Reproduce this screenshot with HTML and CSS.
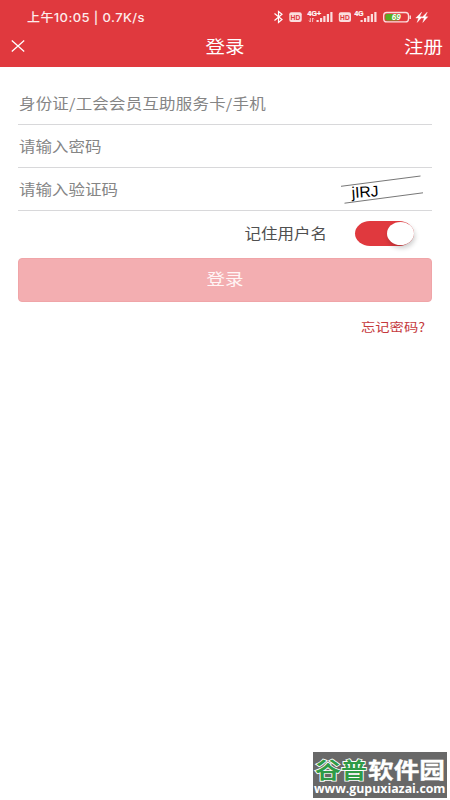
FILE: index.html
```html
<!DOCTYPE html>
<html lang="zh-CN">
<head>
<meta charset="utf-8">
<title>登录</title>
<link rel="stylesheet" href="styles.css">
</head>
<body>
<header class="top">
  <div class="status">
    <span class="time">上午10:05 | 0.7K/s</span>
    <svg class="indicators" width="160" height="24" viewBox="270 5 160 24">
      <path d="M274.5 13.5 282 19.5 278.5 22.5V11.5L282 14.2 274.5 20.5" fill="none" stroke="#fff" stroke-width="1.2"/>
      <rect x="289.3" y="12.3" width="12.4" height="9.6" rx="2" fill="#fbdede"/>
      <text class="hd" x="290.6" y="19.7" textLength="9.8" lengthAdjust="spacingAndGlyphs">HD</text>
      <text class="net" x="307.6" y="16" textLength="13.5" lengthAdjust="spacingAndGlyphs">4G+</text>
      <path d="M310.3 18v4M312.6 18v4M309 20.5l1.3 1.5M312.6 18l1.3 1.3" stroke="#fbdede" stroke-width=".8" fill="none"/>
      <g fill="#fbdede">
        <path d="M316.5 20h2.2v2h-2.2zM320 18h2.2v4H320zM323.3 16h2.2v6h-2.2zM326.8 14h2.2v8h-2.2zM330.3 12h2.2v10h-2.2z"/>
        <path d="M360.5 20h2.2v2h-2.2zM364 18h2.2v4H364zM367.3 16h2.2v6h-2.2zM370.8 14h2.2v8h-2.2zM374.3 12h2.2v10h-2.2z"/>
      </g>
      <rect x="338.8" y="12.3" width="12.2" height="9.6" rx="2" fill="#fbdede"/>
      <text class="hd" x="340.1" y="19.7" textLength="9.6" lengthAdjust="spacingAndGlyphs">HD</text>
      <text class="net" x="354.6" y="16" textLength="9" lengthAdjust="spacingAndGlyphs">4G</text>
      <rect x="383.7" y="12.5" width="24.8" height="9.4" rx="3" fill="none" stroke="#fbdede" stroke-width="1.3"/>
      <path d="M387 14h8.5v6.4h-8.5q-1.6 0-1.6-1.6v-3.2q0-1.6 1.6-1.6z" fill="#58ad20"/>
      <path d="M395.5 14h5l-2 6.4h-3z" fill="#58ad20"/>
      <path d="M410.2 15.5v3.4" stroke="#fbdede" stroke-width="1.5"/>
      <text class="charge" x="391.8" y="20.3" textLength="9" lengthAdjust="spacingAndGlyphs">69</text>
      <path d="M421.6 12.2 415.8 18h2.8l-1.4 4.4 5-5.6h-2.7zM427.2 12.2 421.4 18h2.8l-1.4 4.4 5-5.6h-2.7z" fill="#fff" stroke="#fff" stroke-width=".4"/>
    </svg>
  </div>
  <nav class="nav">
    <svg class="close" width="14" height="12" viewBox="0 0 14 12"><path d="M.8.6 13.2 11.4M13.2.6.8 11.4" stroke="#fff" stroke-width="1.3"/></svg>
    <h1 class="title">登录</h1>
    <a class="register">注册</a>
  </nav>
</header>
<main class="form">
  <div class="field"><span class="hint account">身份证/工会会员互助服务卡/手机</span></div>
  <div class="field"><span class="hint">请输入密码</span></div>
  <div class="field">
    <span class="hint">请输入验证码</span>
    <svg class="captcha" width="84" height="30" viewBox="340 174 84 30">
      <path d="M341 186.3 420.5 176M344.5 203.2 423 192.8" stroke="#777" stroke-width="1"/>
      <text x="352" y="198" transform="rotate(-4 352 198)" textLength="27" lengthAdjust="spacingAndGlyphs">jIRJ</text>
    </svg>
  </div>
  <div class="remember">
    <span class="remember-text">记住用户名</span>
    <span class="switch"><span class="knob"></span></span>
  </div>
  <div class="submit"><span class="submit-text">登录</span></div>
  <div class="forgot"><span class="forgot-text">忘记密码?</span></div>
</main>
<svg class="watermark" width="134" height="46" viewBox="0 0 134 46">
  <rect width="134" height="46" fill="#686868"/>
  <text class="brand brand-green" x="2" y="25.5" textLength="52" lengthAdjust="spacingAndGlyphs">谷普</text>
  <text class="brand brand-white" x="55" y="25.5" textLength="77" lengthAdjust="spacingAndGlyphs">软件园</text>
  <text class="site" x="1" y="41" textLength="131.5" lengthAdjust="spacingAndGlyphs">www.gupuxiazai.com</text>
</svg>
</body>
</html>
```
FILE: styles.css
```css
* { box-sizing: border-box; }
body {
  margin: 0;
  height: 800px;
  overflow: hidden;
  background: #fff;
  font-family: "Noto Sans CJK SC", sans-serif;
}
.top {
  height: 67px;
  padding-top: 5px;
  background: #e0393e;
  color: #fff;
}
.status {
  display: flex;
  align-items: center;
  justify-content: space-between;
  height: 24px;
  padding: 0 20px 0 27px;
}
.time {
  font: 500 13px/24px Inter, "Noto Sans CJK SC", sans-serif;
  letter-spacing: .4px;
  white-space: pre;
  color: #fdecec;
  transform: scaleY(.92);
}
.indicators { display: block; }
.hd { font: 700 7.5px "Liberation Sans", sans-serif; fill: #e0393e; }
.net { font: 700 6.5px "Liberation Sans", sans-serif; fill: #fff; stroke: #fff; stroke-width: .2px; }
.charge { font: italic 700 8.5px "Liberation Sans", sans-serif; fill: #fff; }
.nav {
  display: grid;
  grid-template-columns: 1fr auto 1fr;
  align-items: center;
  height: 34px;
  padding: 0 7px 0 11px;
}
.title, .register {
  margin: 0;
  font-size: 19.5px;
  font-weight: 400;
  line-height: 34px;
  transform: scaleY(.88);
}
.title { margin-right: 4px; }
.register { justify-self: end; }
.form { padding: 15px 18px 0; }
.field {
  display: flex;
  align-items: center;
  justify-content: space-between;
  height: 43px;
  padding: 0 8px 0 1px;
  border-bottom: 1px solid #d8d8da;
}
.hint {
  padding-bottom: 1px;
  font-size: 16.5px;
  line-height: 24px;
  color: #858585;
  transform: scaleY(.87);
}
.account { letter-spacing: .18px; }
.captcha { display: block; }
.captcha text { font: 15.5px "Liberation Sans", sans-serif; fill: #000; }
.remember {
  display: flex;
  align-items: center;
  justify-content: flex-end;
  gap: 28px;
  height: 47px;
  padding: 0 18px 2px 0;
}
.remember-text {
  padding-bottom: 1px;
  font-size: 16.5px;
  line-height: 24px;
  color: #505050;
  transform: scaleY(.87);
}
.switch {
  display: flex;
  justify-content: flex-end;
  align-items: center;
  width: 59px;
  height: 25px;
  border-radius: 15px / 12.5px;
  background: #e0393e;
}
.knob {
  width: 27px;
  height: 23px;
  border-radius: 50%;
  background: #fff;
  box-shadow: 1px 3px 5px rgba(0, 0, 0, .2);
}
.submit {
  display: flex;
  align-items: center;
  justify-content: center;
  height: 44px;
  padding-bottom: 4px;
  border: 1px solid #f0a5a8;
  border-radius: 4px;
  background: #f3aeb1;
}
.submit-text {
  font-size: 18.5px;
  line-height: 28px;
  color: #fff5f5;
  transform: scaleY(.87);
}
.forgot {
  display: flex;
  justify-content: flex-end;
  padding: 15px 7px 0 0;
}
.forgot-text {
  font-size: 14.3px;
  line-height: 20px;
  color: #c5393d;
  transform: scaleY(.86);
}
.watermark {
  position: absolute;
  left: 313px;
  top: 752px;
}
.brand { font: 700 21.5px "Noto Sans CJK SC", sans-serif; }
.brand-green { fill: #2f9b46; stroke: #fff; stroke-width: 1.6px; paint-order: stroke; }
.brand-white { fill: #fff; stroke: #fff; stroke-width: .3px; }
.site { font: 700 12.5px "Open Sans", sans-serif; fill: #fff; }
```
